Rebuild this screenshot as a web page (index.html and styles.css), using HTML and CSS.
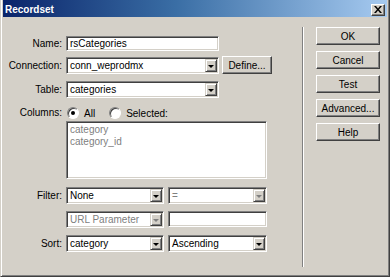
FILE: index.html
```html
<!DOCTYPE html>
<html lang="en">
<head>
    <meta charset="UTF-8">
    <title>Recordset</title>
    <link rel="stylesheet" href="styles.css">
</head>
<body>
    <div class="dialog">
        <div class="titlebar">
            <span class="title">Recordset</span>
            <div class="close">
                <svg width="8" height="7" viewBox="0 0 8 7"><path d="M0 0h2l2 2.5L6 0h2L5 3.5 8 7H6L4 4.5 2 7H0l3-3.5z" fill="#000"/></svg>
            </div>
        </div>
        <div class="body">
            <div class="form">
                <div class="row row-name">
                    <label>Name:</label>
                    <div class="field text wide">rsCategories</div>
                </div>
                <div class="row">
                    <label>Connection:</label>
                    <div class="field select wide">
                        <span class="value">conn_weprodmx</span>
                        <span class="arrow"></span>
                    </div>
                    <div class="btn define">Define...</div>
                </div>
                <div class="row">
                    <label>Table:</label>
                    <div class="field select wide">
                        <span class="value">categories</span>
                        <span class="arrow"></span>
                    </div>
                </div>
                <div class="columns">
                    <label>Columns:</label>
                    <div class="columns-body">
                        <div class="radios">
                            <span class="radio checked"></span><span class="radio-label">All</span>
                            <span class="radio"></span><span class="radio-label">Selected:</span>
                        </div>
                        <div class="listbox">
                            <div>category</div>
                            <div>category_id</div>
                        </div>
                    </div>
                </div>
                <div class="row row-filter">
                    <label>Filter:</label>
                    <div class="field select half">
                        <span class="value">None</span>
                        <span class="arrow"></span>
                    </div>
                    <div class="field select half2 disabled">
                        <span class="value">=</span>
                        <span class="arrow"></span>
                    </div>
                </div>
                <div class="row">
                    <label></label>
                    <div class="field select half disabled">
                        <span class="value">URL Parameter</span>
                        <span class="arrow"></span>
                    </div>
                    <div class="field text half2"></div>
                </div>
                <div class="row">
                    <label>Sort:</label>
                    <div class="field select half">
                        <span class="value">category</span>
                        <span class="arrow"></span>
                    </div>
                    <div class="field select half2">
                        <span class="value">Ascending</span>
                        <span class="arrow"></span>
                    </div>
                </div>
            </div>
            <div class="divider"></div>
            <div class="actions">
                <div class="btn">OK</div>
                <div class="btn">Cancel</div>
                <div class="btn">Test</div>
                <div class="btn">Advanced...</div>
                <div class="btn">Help</div>
            </div>
        </div>
    </div>
</body>
</html>
```

FILE: styles.css
```css
body {
    margin: 0;
    font-family: "Liberation Sans", Arial, sans-serif;
    font-size: 10px;
    color: #000;
}
.dialog {
    width: 390px;
    height: 277px;
    box-sizing: border-box;
    background: #d4d0c8;
    border: 1px solid;
    border-color: transparent #404040 #404040 #d4d0c8;
    border-top: 0;
    padding: 0 2px 2px 2px;
    box-shadow: inset 1px 0 #fff, inset -1px -1px #808080;
}
.titlebar {
    height: 17px;
    display: flex;
    align-items: center;
    justify-content: space-between;
    background: linear-gradient(to right, #0a246a, #3a6ea5 45%, #a6caf0);
    padding: 0 2px 0 2px;
}
.title {
    color: #fff;
    font-weight: bold;
    font-size: 10px;
    padding-top: 1px;
}
.close {
    width: 14px;
    height: 12px;
    box-sizing: border-box;
    background: #d4d0c8;
    border: 1px solid;
    border-color: #fff #404040 #404040 #fff;
    box-shadow: inset -1px -1px #808080;
    display: flex;
    align-items: center;
    justify-content: center;
    margin-top: 2px;
}
.body {
    display: flex;
    padding-top: 10px;
}
.form {
    width: 299px;
    padding-top: 6px;
}
.row {
    display: flex;
    align-items: center;
    height: 24px;
}
.row-name {
    height: 20px;
}
label {
    width: 59px;
    margin-right: 4px;
    text-align: right;
    flex-shrink: 0;
}
.field {
    box-sizing: border-box;
    height: 17px;
    background: #fff;
    border: 1px solid;
    border-color: #808080 #fff #fff #808080;
    box-shadow: inset 1px 1px #404040, inset -1px -1px #d4d0c8;
    padding: 2px 3px;
    line-height: 12px;
    white-space: nowrap;
}
.field.text {
    height: 15px;
    padding: 1px 3px;
}
.field.text.half2 {
    height: 16px;
}
.wide {
    width: 153px;
}
.half {
    width: 98px;
}
.half2 {
    width: 99px;
    margin-left: 4px;
}
.select {
    display: flex;
    padding: 2px 2px 2px 3px;
}
.select .value {
    flex: 1;
    line-height: 12px;
}
.select .arrow {
    width: 12px;
    margin: -1px -1px -1px 0;
    box-sizing: border-box;
    background: #d4d0c8;
    border: 1px solid;
    border-color: #d4d0c8 #404040 #404040 #d4d0c8;
    box-shadow: inset 1px 1px #fff, inset -1px -1px #808080;
    position: relative;
}
.select .arrow::after {
    content: "";
    position: absolute;
    left: 2px;
    top: 5px;
    border-left: 3px solid transparent;
    border-right: 3px solid transparent;
    border-top: 3px solid #000;
}
.disabled .value {
    color: #808080;
}
.disabled .arrow::after {
    border-top-color: #808080;
}
.btn {
    box-sizing: border-box;
    height: 18px;
    background: #d4d0c8;
    border: 1px solid;
    border-color: #fff #404040 #404040 #fff;
    box-shadow: inset -1px -1px #808080;
    display: flex;
    align-items: center;
    justify-content: center;
}
.define {
    width: 50px;
    margin-left: 3px;
}
.columns {
    display: flex;
    margin-top: 6px;
}
.columns label {
    line-height: 12px;
}
.columns-body {
    display: flex;
    flex-direction: column;
}
.radios {
    display: flex;
    align-items: center;
    height: 12px;
    margin-left: 1px;
}
.radio {
    width: 12px;
    height: 12px;
    box-sizing: border-box;
    border-radius: 50%;
    background: #fff;
    border: 1px solid;
    border-color: #808080 #fff #fff #808080;
    box-shadow: inset 1px 1px #404040;
    position: relative;
}
.radio.checked::after {
    content: "";
    position: absolute;
    left: 3px;
    top: 3px;
    width: 4px;
    height: 4px;
    border-radius: 50%;
    background: #000;
}
.radio-label {
    margin-left: 5px;
    margin-right: 14px;
}
.listbox {
    box-sizing: border-box;
    width: 201px;
    height: 58px;
    margin-top: 2px;
    background: #fff;
    border: 1px solid;
    border-color: #808080 #fff #fff #808080;
    box-shadow: inset 1px 1px #404040, inset -1px -1px #d4d0c8;
    padding: 2px 3px;
    line-height: 12px;
    color: #808080;
}
.row-filter {
    margin-top: 4px;
}
.divider {
    width: 1px;
    height: 240px;
    background: #808080;
    border-right: 1px solid #fff;
}
.actions {
    display: flex;
    flex-direction: column;
    gap: 6px;
    margin-left: 12px;
    width: 64px;
}
```
